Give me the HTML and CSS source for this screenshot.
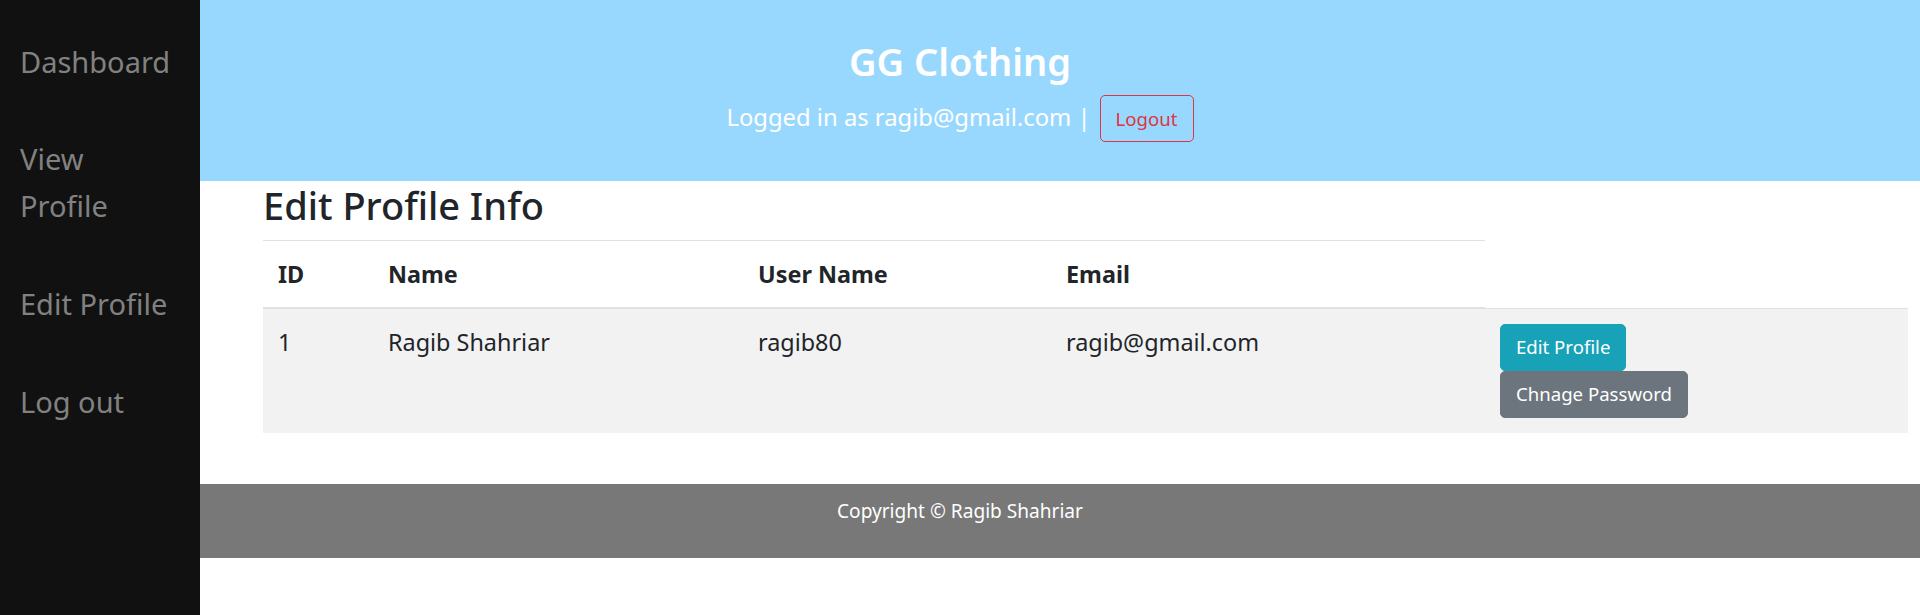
FILE: index.html
```html
<!DOCTYPE html>
<html lang="en">
<head>
<meta charset="utf-8">
<title>GG Clothing - Edit Profile Info</title>
<link rel="stylesheet" href="styles.css">
</head>
<body>
<aside class="sidenav">
  <a href="#" class="sidenav-link">Dashboard</a>
  <a href="#" class="sidenav-link">View<br>Profile</a>
  <a href="#" class="sidenav-link">Edit Profile</a>
  <a href="#" class="sidenav-link">Log out</a>
</aside>

<header class="topbar">
  <h2 class="brand">GG Clothing</h2>
  <div class="session">
    <span class="session-text">Logged in as ragib@gmail.com |</span>
    <a href="#" class="btn btn-outline-danger">Logout</a>
  </div>
</header>

<main class="content">
  <h2 class="page-title">Edit Profile Info</h2>
  <table class="info-table">
    <thead>
      <tr>
        <th class="col-id">ID</th>
        <th class="col-name">Name</th>
        <th class="col-user">User Name</th>
        <th class="col-email">Email</th>
      </tr>
    </thead>
    <tbody>
      <tr class="row-odd">
        <td>1</td>
        <td>Ragib Shahriar</td>
        <td>ragib80</td>
        <td>ragib@gmail.com</td>
        <td class="col-actions">
          <div class="action-stack">
            <a href="#" class="btn btn-info">Edit Profile</a>
            <a href="#" class="btn btn-secondary">Chnage Password</a>
          </div>
        </td>
      </tr>
    </tbody>
  </table>
</main>

<footer class="site-footer">
  <p class="copyright">Copyright © Ragib Shahriar</p>
</footer>
</body>
</html>
```

FILE: styles.css
```css
* {
  box-sizing: border-box;
}

body {
  margin: 0;
  font-family: "Noto Sans", "Open Sans", sans-serif;
  font-size: 20px;
  line-height: 1.5;
  color: #212529;
  background: #fff;
}

/* Sidebar */
.sidenav {
  position: fixed;
  top: 0;
  left: 0;
  width: 200px;
  height: 100%;
  background: #111111;
  padding-top: 13px;
  z-index: 10;
}

.sidenav-link {
  display: block;
  padding: 25.5px 10px 25.5px 20px;
  font-size: 29px;
  line-height: 46.9px;
  color: #818181;
  text-decoration: none;
}

/* Header */
.topbar {
  background: #99d8fe;
  color: #fff;
  text-align: center;
  padding: 37px 0 39px;
}

.brand {
  margin: 0 0 10px;
  font-size: 38px;
  line-height: 48px;
  font-weight: 600;
}

.session {
  display: flex;
  justify-content: center;
  align-items: baseline;
  gap: 9px;
}

.session-text {
  font-size: 23.8px;
  line-height: 37.5px;
}

/* Buttons */
.btn {
  display: inline-block;
  padding: 7.5px 15px;
  font-size: 18.6px;
  line-height: 30px;
  border: 1px solid transparent;
  border-radius: 5px;
  text-decoration: none;
  white-space: nowrap;
}

.btn-outline-danger {
  color: #dc3545;
  border-color: #dc3545;
  background: transparent;
}

.btn-info {
  color: #fff;
  background: #17a2b8;
  border-color: #17a2b8;
}

.btn-secondary {
  color: #fff;
  background: #6c757d;
  border-color: #6c757d;
}

/* Content */
.content {
  padding: 0 12px 0 263px;
}

.page-title {
  margin: 0 0 11px;
  font-size: 38px;
  line-height: 48px;
  font-weight: 500;
}

.info-table {
  width: 100%;
  border-collapse: collapse;
  font-size: 23.4px;
  line-height: 36px;
  margin: 0 0 51px;
}

.info-table th,
.info-table td {
  padding: 15px;
  text-align: left;
  vertical-align: top;
  border-top: 1px solid #dee2e6;
}

.info-table thead th {
  font-weight: 700;
  border-bottom: 2px solid #dee2e6;
}

.col-id { width: 110px; }
.col-name { width: 370px; }
.col-user { width: 308px; }
.col-email { width: 434px; }

.row-odd {
  background: #f2f2f2;
}

.action-stack {
  display: flex;
  flex-direction: column;
  align-items: flex-start;
}

/* Footer */
.site-footer {
  background: #787878;
  color: #fff;
  text-align: center;
  padding: 12px 0 32px;
}

.copyright {
  margin: 0;
  font-size: 19.1px;
  line-height: 30px;
}
```
